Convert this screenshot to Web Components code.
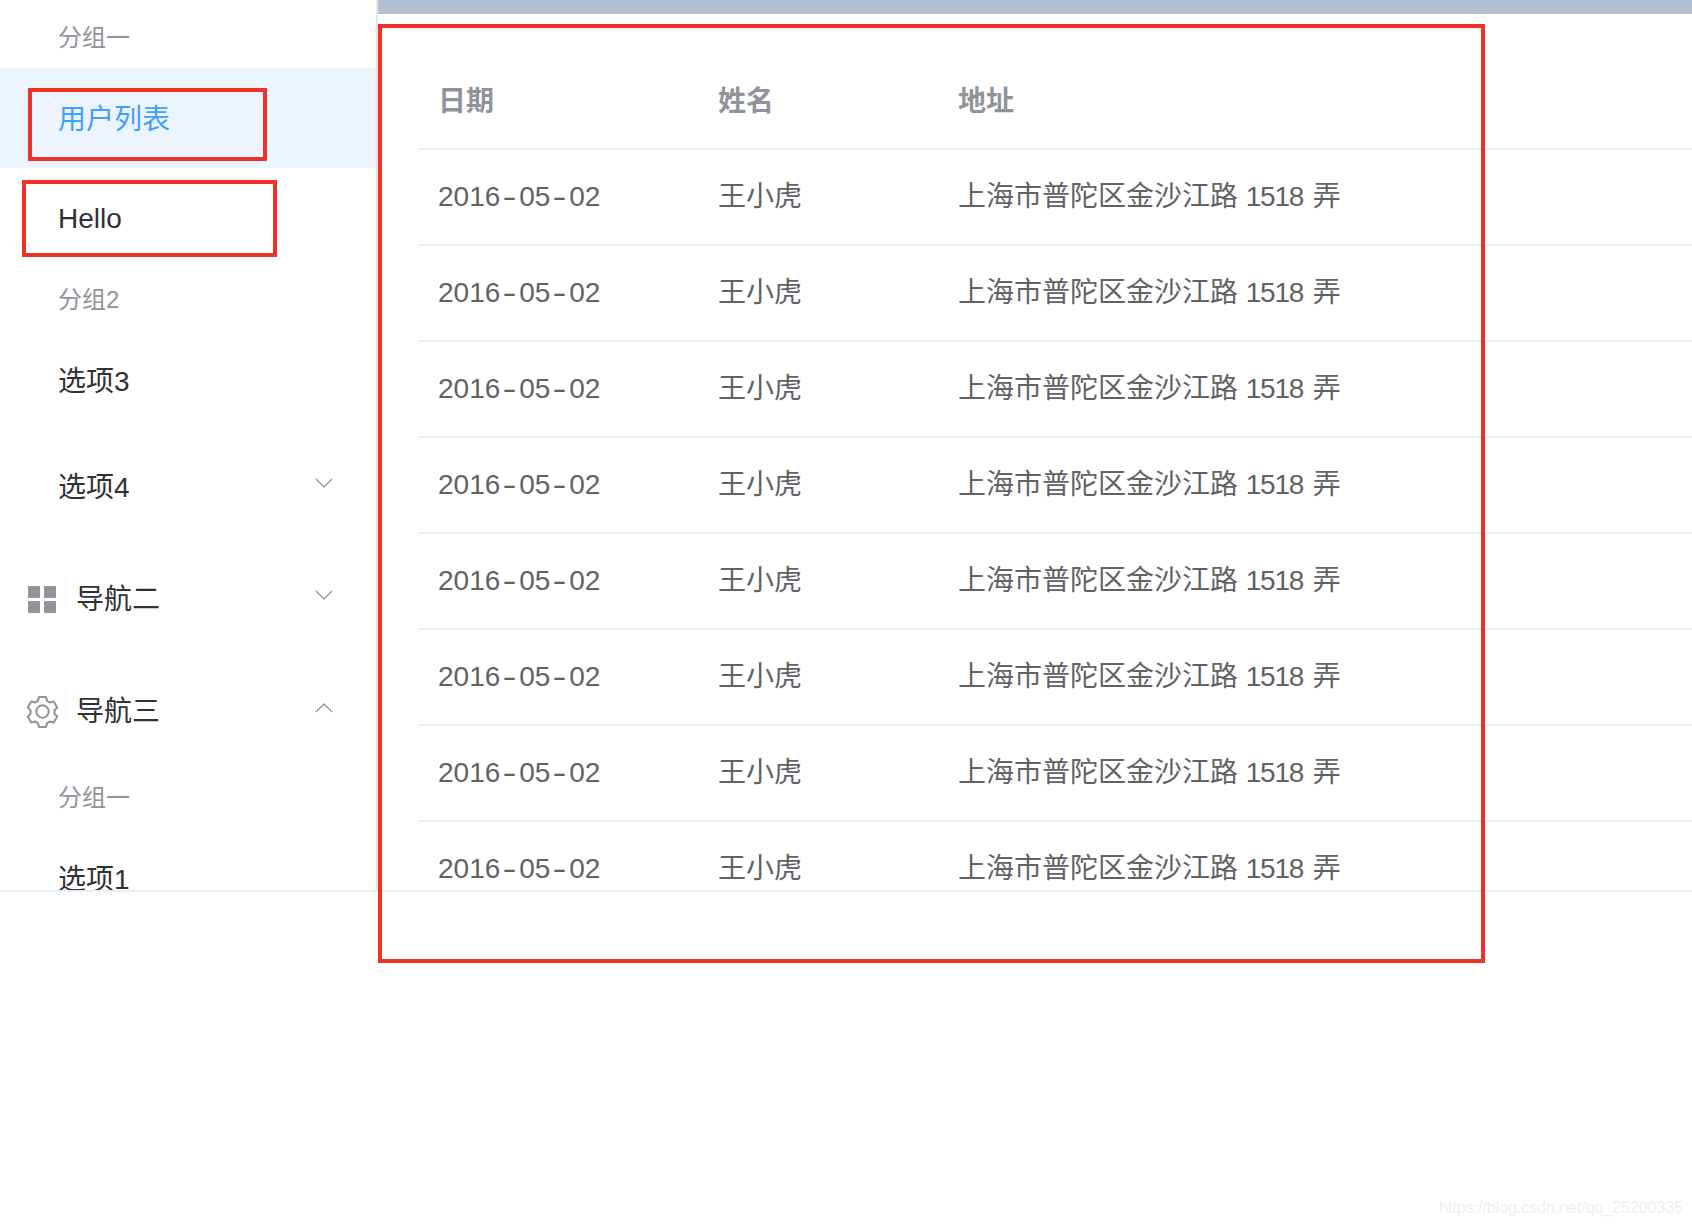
<!DOCTYPE html>
<html>
<head>
<meta charset="utf-8">
<style>
html, body { margin: 0; padding: 0; background: #fff; }
body { font-family: "Liberation Sans", "Noto Sans CJK SC", sans-serif; height: 1226px; position: relative; overflow: hidden; }
</style>
</head>
<body>
<app-shell>
  <side-menu slot="side">
    <menu-group first>分组一</menu-group>
    <menu-item active marked="inner">用户列表</menu-item>
    <menu-item marked="outer">Hello</menu-item>
    <menu-group>分组2</menu-group>
    <menu-item>选项3</menu-item>
    <sub-title arrow="down" indent>选项4</sub-title>
    <sub-title arrow="down" icon="grid">导航二</sub-title>
    <sub-title arrow="up" icon="gear">导航三</sub-title>
    <menu-group>分组一</menu-group>
    <menu-item>选项1</menu-item>
  </side-menu>
  <data-table slot="main"></data-table>
</app-shell>
<script>
const font = `"Liberation Sans", "Noto Sans CJK SC", sans-serif`;

class AppShell extends HTMLElement {
  constructor() {
    super();
    this.attachShadow({ mode: 'open' }).innerHTML = `<style>
:host { display: flex; height: 892px; border-bottom: 2px solid #ebeef5; box-sizing: border-box; position: relative; }
.side { width: 378px; flex: none; box-sizing: border-box; border-right: 2px solid #e6e6e6; overflow: hidden; }
.main { flex: 1; min-width: 0; overflow: hidden; display: flex; flex-direction: column; }
.bar { height: 14px; flex: none; background: #b3c0d1; }
.callout { position: absolute; left: 378px; top: 24px; width: 1107px; height: 939px; box-sizing: border-box; border: 4px solid #ee3226; }
</style>
<div class="side"><slot name="side"></slot></div>
<div class="main"><div class="bar"></div><slot name="main"></slot></div>
<div class="callout"></div>`;
  }
}
customElements.define('app-shell', AppShell);

class SideMenu extends HTMLElement {
  constructor() {
    super();
    this.attachShadow({ mode: 'open' }).innerHTML = `<style>
:host { display: block; font-family: ${font}; }
</style><slot></slot>`;
  }
}
customElements.define('side-menu', SideMenu);

class MenuGroup extends HTMLElement {
  constructor() {
    super();
    this.attachShadow({ mode: 'open' }).innerHTML = `<style>
:host { display: block; height: 62px; line-height: 64px; padding-left: 58px; font-size: 24px; color: #909399; }
:host([first]) { padding-top: 6px; }
</style><slot></slot>`;
  }
}
customElements.define('menu-group', MenuGroup);

class MenuItem extends HTMLElement {
  constructor() {
    super();
    this.attachShadow({ mode: 'open' }).innerHTML = `<style>
:host { display: block; height: 100px; line-height: 103px; padding-left: 58px; font-size: 28px; color: #303133; position: relative; }
:host([active]) { background: #ecf5ff; color: #409eff; }
:host([marked="outer"]) { line-height: 101px; }
.mark { display: none; position: absolute; box-sizing: border-box; border: 4px solid #ee3226; }
:host([marked="inner"]) .mark { display: block; left: 28px; top: 20px; width: 239px; height: 73px; }
:host([marked="outer"]) .mark { display: block; left: 22px; top: 12px; width: 255px; height: 77px; }
</style><slot></slot><div class="mark"></div>`;
  }
}
customElements.define('menu-item', MenuItem);

class SubTitle extends HTMLElement {
  constructor() {
    super();
    const icons = {
      grid: `<svg width="28" height="27" viewBox="0 0 28 27" fill="#909399"><rect width="12" height="12" rx="1"/><rect x="16" width="12" height="12" rx="1"/><rect y="15" width="12" height="12" rx="1"/><rect x="16" y="15" width="12" height="12" rx="1"/></svg>`,
      gear: `<svg width="33" height="33" viewBox="0 0 32 32" fill="none" stroke="#909399" stroke-width="2"><path d="M12.6 2h6.8l1 3.6 2.9 1.7 3.6-1 3.4 5.9-2.7 2.6v3.4l2.7 2.6-3.4 5.9-3.6-1-2.9 1.7-1 3.6h-6.8l-1-3.6-2.9-1.7-3.6 1-3.4-5.9 2.7-2.6v-3.4L1.7 12.2l3.4-5.9 3.6 1 2.9-1.7z" stroke-linejoin="round"/><circle cx="16" cy="16" r="6"/></svg>`
    };
    const arrow = this.getAttribute('arrow') === 'up' ? 'M1 9 9 1l8 8' : 'M1 1l8 8 8-8';
    const icon = icons[this.getAttribute('icon')];
    this.attachShadow({ mode: 'open' }).innerHTML = `<style>
:host { display: flex; align-items: center; height: 112px; font-size: 28px; color: #303133; position: relative; padding-left: 28px; }
:host([indent]) { padding-left: 58px; }
.ico { width: 28px; display: flex; justify-content: center; margin-right: 20px; margin-top: 3px; }
.ico svg { flex: none; }
.label { padding-bottom: 2px; }
.arrow { position: absolute; left: 315px; top: 48px; width: 18px; height: 10px; }
:host([arrow="up"]) .arrow { top: 49px; }
</style>${icon ? `<span class="ico">${icon}</span>` : ''}<span class="label"><slot></slot></span>
<svg class="arrow" viewBox="0 0 18 10" fill="none" stroke="#909399" stroke-width="1.3"><path d="${arrow}"/></svg>`;
  }
}
customElements.define('sub-title', SubTitle);

class DataTable extends HTMLElement {
  constructor() {
    super();
    const date = `2016<i>-</i>05<i>-</i>02`;
    let rows = '';
    for (let i = 0; i < 8; i++) {
      rows += `<div class="row"><span>${date}</span><span>王小虎</span><span>上海市普陀区金沙江路 <b>1518</b><em> </em>弄</span></div>`;
    }
    this.attachShadow({ mode: 'open' }).innerHTML = `<style>
:host { display: block; margin-left: 40px; font-family: ${font}; font-size: 28px; color: #606266; }
.row, .head { display: grid; grid-template-columns: 280px 240px 1fr; box-sizing: border-box; border-bottom: 2px solid #ebeef5; }
.row { height: 96px; line-height: 94px; }
.head { height: 136px; line-height: 176px; font-weight: bold; color: #909399; }
.row span, .head span { padding-left: 20px; white-space: nowrap; }
i { display: inline-block; font-style: normal; padding: 0 4.8px; transform: scaleX(1.5); }
b { font-weight: normal; letter-spacing: -1.25px; }
em { font-style: normal; letter-spacing: 2px; }
</style>
<div class="head"><span>日期</span><span>姓名</span><span>地址</span></div>
${rows}`;
  }
}
customElements.define('data-table', DataTable);

class WaterMark extends HTMLElement {
  constructor() {
    super();
    this.attachShadow({ mode: 'open' }).innerHTML = `<style>
:host { position: absolute; right: 9px; top: 1198px; font-family: ${font}; font-size: 15.9px; line-height: 20px; color: #efefef; }
</style><slot></slot>`;
  }
}
customElements.define('water-mark', WaterMark);
document.body.insertAdjacentHTML('beforeend', '<water-mark>https://blog.csdn.net/qq_25200335</water-mark>');
</script>
</body>
</html>
